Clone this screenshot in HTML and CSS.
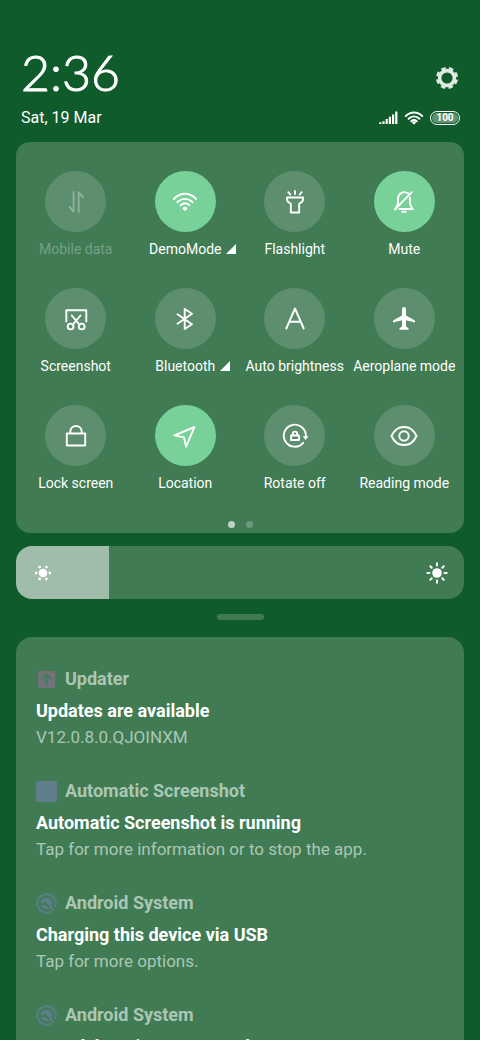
FILE: index.html
```html
<!DOCTYPE html>
<html lang="en">
<head>
<meta charset="utf-8">
<meta name="viewport" content="width=device-width, initial-scale=1">
<title>Control centre</title>
<link rel="stylesheet" href="styles.css">
</head>
<body>
<main class="shade">
  <header class="header">
    <div class="header-row">
      <time class="clock">2:36</time>
      <button class="settings" type="button" aria-label="Settings">
        <svg width="24" height="24" viewBox="0 0 24 24" fill="none" stroke="#dfebe2"><circle cx="12" cy="12" r="7.400" stroke-width="3.600"/><circle cx="12" cy="12" r="9.600" stroke-width="3" stroke-dasharray="4.400 3.140" transform="rotate(9.400 12 12)"/></svg>
      </button>
    </div>
    <div class="header-row">
      <span class="date">Sat, 19 Mar</span>
      <div class="status">
        <svg width="19" height="14" viewBox="0 0 19 14" fill="none" stroke="#fff" stroke-width="2.200"><path d="M1.300 13v-1.800M4.500 13v-2.800M7.700 13V8M10.900 13V5.800M14.100 13V3.400M17.300 13V.600"/></svg>
        <svg width="20" height="14" viewBox="0 0 20 14" fill="none" stroke="#fff" stroke-width="2" stroke-linecap="round"><path d="M1.800 5C6.500.2 13.500.2 18.200 5M4.600 7.800c3.200-3 7.600-3 10.800 0M7.300 10.300c1.600-1.400 3.800-1.400 5.400 0"/><path fill="#fff" stroke="none" d="M7.800 11.300Q10 9.700 12.200 11.300L10 13.800Z"/></svg>
        <span class="battery"><span class="battery-level">100</span></span>
      </div>
    </div>
  </header>

  <section class="panel toggles" aria-label="Quick settings">
    <div class="grid">
      <button class="tile disabled" type="button" disabled>
        <span class="disc"><svg class="icon" viewBox="0 0 28 28"><path d="M11.600 4v19.500L7.500 19M16.700 24V4.500L20.800 9"/></svg></span>
        <span class="label">Mobile data</span>
      </button>
      <button class="tile on" type="button">
        <span class="disc"><svg class="icon" viewBox="0 0 28 28"><path d="M2.900 11C9.500 4 18.500 4 25.100 11M6.300 14.200c4.700-4.500 10.700-4.500 15.400 0M9.500 17.200c2.800-2.500 6.200-2.500 9 0"/><path class="solid" d="M11.600 19.800q2.400-1.900 4.800 0v1.300L14 23l-2.400-1.900Z"/></svg></span>
        <span class="label">DemoMode<svg class="more" viewBox="0 0 10 10"><path d="M10 0v10H0Z"/></svg></span>
      </button>
      <button class="tile" type="button">
        <span class="disc"><svg class="icon" viewBox="0 0 28 28"><path d="M14 3v3M7.300 4.200l2 2.300M20.700 4.200l-2 2.300M6 9.500h16v2.200q0 1.800-3.800 4V24.500H9.800v-8.800Q6 13.500 6 11.700Z"/></svg></span>
        <span class="label">Flashlight</span>
      </button>
      <button class="tile on" type="button">
        <span class="disc"><svg class="icon" viewBox="0 0 28 28"><path d="M18.300 5.500C13.500 2.200 8.200 5.400 8 10.800v4.400q-.2 2.200-2.700 5.300M21.800 4.200 5 21.500M20 9.500v5.700q.2 2.700 2.800 5.800H9.500M12.200 23.800h3.600"/></svg></span>
        <span class="label">Mute</span>
      </button>

      <button class="tile" type="button">
        <span class="disc"><svg class="icon" viewBox="0 0 28 28"><path d="M4.300 16.500V5.300h20v11.200M9.800 10.500l7.900 9.300M18.500 10.500l-7.900 9.300"/><circle cx="8.600" cy="21.500" r="2.900"/><circle cx="19.700" cy="21.500" r="2.900"/></svg></span>
        <span class="label">Screenshot</span>
      </button>
      <button class="tile" type="button">
        <span class="disc"><svg class="icon" viewBox="0 0 28 28"><path d="M6.500 9.300 21 19.200 13.700 24V4L21 8.800 6.500 18.800"/></svg></span>
        <span class="label">Bluetooth<svg class="more" viewBox="0 0 10 10"><path d="M10 0v10H0Z"/></svg></span>
      </button>
      <button class="tile" type="button">
        <span class="disc"><svg class="icon" viewBox="0 0 28 28"><path d="M5.300 23.500 14 3.500l8.700 20M8.300 16.800h11.400"/></svg></span>
        <span class="label">Auto brightness</span>
      </button>
      <button class="tile" type="button">
        <span class="disc"><svg class="icon" viewBox="0 0 28 28"><path class="solid" d="M12 5q0-3 2-3t2 3v5.600l8.500 4.700q.7.500.5 2.200L16 15.300v6.200l2.500 1.700v1.500h-9v-1.500l2.500-1.700v-6.200l-9 2.200q-.2-1.700.5-2.200L12 10.600Z"/></svg></span>
        <span class="label">Aeroplane mode</span>
      </button>

      <button class="tile" type="button">
        <span class="disc"><svg class="icon" viewBox="0 0 28 28"><path d="M4.800 11.500h18.400v12H4.800ZM8.300 11.500V9.700c0-7.700 11.400-7.700 11.400 0v1.800"/></svg></span>
        <span class="label">Lock screen</span>
      </button>
      <button class="tile on" type="button">
        <span class="disc"><svg class="icon" viewBox="0 0 28 28"><path d="M23.500 5 3.500 13.400l9.500 2 2 9.400Z"/></svg></span>
        <span class="label">Location</span>
      </button>
      <button class="tile" type="button">
        <span class="disc"><svg class="icon" viewBox="0 0 28 28"><path d="M22.200 20.800A11 11 0 1 1 24.800 14M10 13.500h8v4.500h-8ZM11.800 13.300v-1.500c0-2.900 4.400-2.900 4.400 0v1.500"/><path class="solid" d="M21.700 14.200h5.800L24.600 18Z"/></svg></span>
        <span class="label">Rotate off</span>
      </button>
      <button class="tile" type="button">
        <span class="disc"><svg class="icon" viewBox="0 0 28 28"><path d="M1.500 14Q5.500 5 14 5t12.500 9Q22.500 23 14 23T1.500 14Z"/><circle cx="14" cy="14" r="4.700"/></svg></span>
        <span class="label">Reading mode</span>
      </button>
    </div>
    <div class="pages"><span class="dot current"></span><span class="dot"></span></div>
  </section>

  <div class="brightness">
    <input class="range" type="range" min="0" max="100" value="21" aria-label="Brightness">
    <svg class="sun low" viewBox="0 0 24 24" fill="#fff"><circle cx="12" cy="12" r="4.300"/><circle cx="5.200" cy="12" r="1.400"/><circle cx="18.800" cy="12" r="1.400"/><circle cx="8.600" cy="6.100" r="1.400"/><circle cx="15.400" cy="6.100" r="1.400"/><circle cx="8.600" cy="17.900" r="1.400"/><circle cx="15.400" cy="17.900" r="1.400"/></svg>
    <svg class="sun high" viewBox="0 0 24 24"><circle cx="12" cy="12" r="4.800" fill="#fff"/><path fill="none" stroke="#fff" stroke-width="2" stroke-linecap="round" d="M12 2.300v2.200M12 19.500v2.200M2.300 12h2.200M19.500 12h2.200M5.300 5.300l1.400 1.400M17.300 17.300l1.400 1.400M5.300 18.700l1.400-1.400M17.300 6.700l1.400-1.400"/></svg>
  </div>

  <div class="handle"></div>

  <section class="panel notifications" aria-label="Notifications">
    <article class="note">
      <div class="app"><svg class="app-icon" viewBox="0 0 21 21"><rect x="2" y="2" width="17" height="17" rx="1.500" fill="#71737a"/><path fill="none" stroke="#407b54" stroke-width="1.800" d="M10.500 16V6M5.800 10.200l4.700-4.700 4.700 4.700"/></svg>Updater</div>
      <h2 class="title">Updates are available</h2>
      <p class="text">V12.0.8.0.QJOINXM</p>
    </article>
    <article class="note">
      <div class="app"><svg class="app-icon" viewBox="0 0 21 21"><rect width="21" height="21" rx="2" fill="#607d8b"/></svg>Automatic Screenshot</div>
      <h2 class="title">Automatic Screenshot is running</h2>
      <p class="text">Tap for more information or to stop the app.</p>
    </article>
    <article class="note">
      <div class="app"><svg class="app-icon" viewBox="0 0 21 21" fill="none"><path stroke="#5c7e88" stroke-width="2" d="M15.500 18.100A9.200 9.200 0 1 1 18.900 14.200"/><circle cx="10.500" cy="10.500" r="6" fill="#5c7e88"/><path stroke="#407b54" stroke-width="1.700" d="M3.500 8.800 6.800 11.800 9 9.800l6.500 7"/><path stroke="#5c7e88" stroke-width="2" d="m13.500 13.500 4 3.800"/></svg>Android System</div>
      <h2 class="title">Charging this device via USB</h2>
      <p class="text">Tap for more options.</p>
    </article>
    <article class="note">
      <div class="app"><svg class="app-icon" viewBox="0 0 21 21" fill="none"><path stroke="#5c7e88" stroke-width="2" d="M15.500 18.100A9.200 9.200 0 1 1 18.900 14.200"/><circle cx="10.500" cy="10.500" r="6" fill="#5c7e88"/><path stroke="#407b54" stroke-width="1.700" d="M3.500 8.800 6.800 11.800 9 9.800l6.500 7"/><path stroke="#5c7e88" stroke-width="2" d="m13.500 13.500 4 3.800"/></svg>Android System</div>
      <h2 class="title">USB debugging connected</h2>
    </article>
  </section>
</main>
</body>
</html>
```
FILE: styles.css
```css
* { box-sizing: border-box; }

body {
  margin: 0;
  background: #0f5b2b;
  color: #fff;
  font-family: Roboto, "Liberation Sans", sans-serif;
}

.shade {
  display: flex;
  flex-direction: column;
  height: 100vh;
  padding: 48px 16px 0;
  overflow: hidden;
}

button {
  padding: 0;
  border: 0;
  background: none;
  color: inherit;
  font: inherit;
}

svg { flex: none; display: block; }

.header {
  flex: none;
  padding: 0 4px 14px 5px;
}

.header-row {
  display: flex;
  justify-content: space-between;
  align-items: center;
}

.clock {
  padding-bottom: 12px;
  font: 300 50px/48px Lato, Roboto, sans-serif;
  -webkit-text-stroke: 1px #fff;
}

.settings { padding-right: 1px; }

.date {
  font-size: 16px;
  line-height: 20px;
}

.status {
  display: flex;
  align-items: center;
  gap: 6px;
}

.battery {
  display: flex;
  width: 30px;
  height: 14px;
  padding: 1px;
  border: 1px solid #fff;
  border-radius: 7px;
}

.battery-level {
  flex: 1;
  border-radius: 5px;
  background: #5f9372;
  font-size: 10px;
  font-weight: 700;
  line-height: 10px;
  text-align: center;
}

.panel {
  flex: none;
  background: #407b54;
  border-radius: 14px;
}

.toggles { padding: 29px 5px 5px; }

.grid {
  display: grid;
  grid-template-columns: repeat(4, minmax(0, 1fr));
  row-gap: 30px;
}

.tile {
  display: flex;
  flex-direction: column;
  align-items: center;
  gap: 8px;
}

.disc {
  display: grid;
  place-items: center;
  width: 61px;
  height: 61px;
  border-radius: 50%;
  background: #5d8f6f;
}

.on .disc { background: #78d199; }

.icon {
  width: 28px;
  height: 28px;
  fill: none;
  stroke: #fff;
  stroke-width: 1.9;
  stroke-linejoin: round;
  stroke-linecap: round;
}

.icon .solid { fill: #fff; stroke: none; }

.disabled .icon { opacity: 0.3; }

.label {
  display: flex;
  align-items: center;
  font-size: 14px;
  line-height: 18px;
  white-space: nowrap;
}

.disabled .label { color: #76a085; }

.more {
  width: 10px;
  height: 10px;
  margin: 0 -15px 0 5px;
  fill: #fff;
}

.pages {
  display: flex;
  justify-content: center;
  gap: 11px;
  padding-top: 29px;
}

.dot {
  width: 7px;
  height: 7px;
  border-radius: 50%;
  background: #6b9a7b;
}

.dot.current { background: #bfd3c6; }

.brightness {
  position: relative;
  flex: none;
  height: 53px;
  margin-top: 13px;
}

.range {
  display: block;
  appearance: none;
  width: 100%;
  height: 100%;
  margin: 0;
  border-radius: 16px;
  background: linear-gradient(90deg, #a0bdab 20.8%, #407b54 20.8%);
}

.range::-webkit-slider-thumb {
  appearance: none;
  width: 1px;
  height: 53px;
}

.sun {
  position: absolute;
  top: 15px;
  width: 24px;
  height: 24px;
  pointer-events: none;
}

.low { left: 15px; }
.high { right: 15px; }

.handle {
  flex: none;
  align-self: center;
  width: 47px;
  height: 6px;
  margin: 15px 0 17px;
  border-radius: 3px;
  background: #407b54;
}

.notifications {
  display: flex;
  flex-direction: column;
  gap: 31px;
  padding: 31px 20px;
  border-radius: 16px;
}

.app {
  display: flex;
  align-items: center;
  gap: 8px;
  color: #abc7b4;
  font-size: 18px;
  font-weight: 700;
  line-height: 22px;
}

.app-icon {
  width: 21px;
  height: 21px;
}

.title {
  margin: 9px 0 0;
  font-size: 18px;
  font-weight: 700;
  line-height: 24px;
}

.text {
  margin: 2px 0 0;
  color: #abc7b4;
  font-size: 17px;
  line-height: 24px;
}
```
